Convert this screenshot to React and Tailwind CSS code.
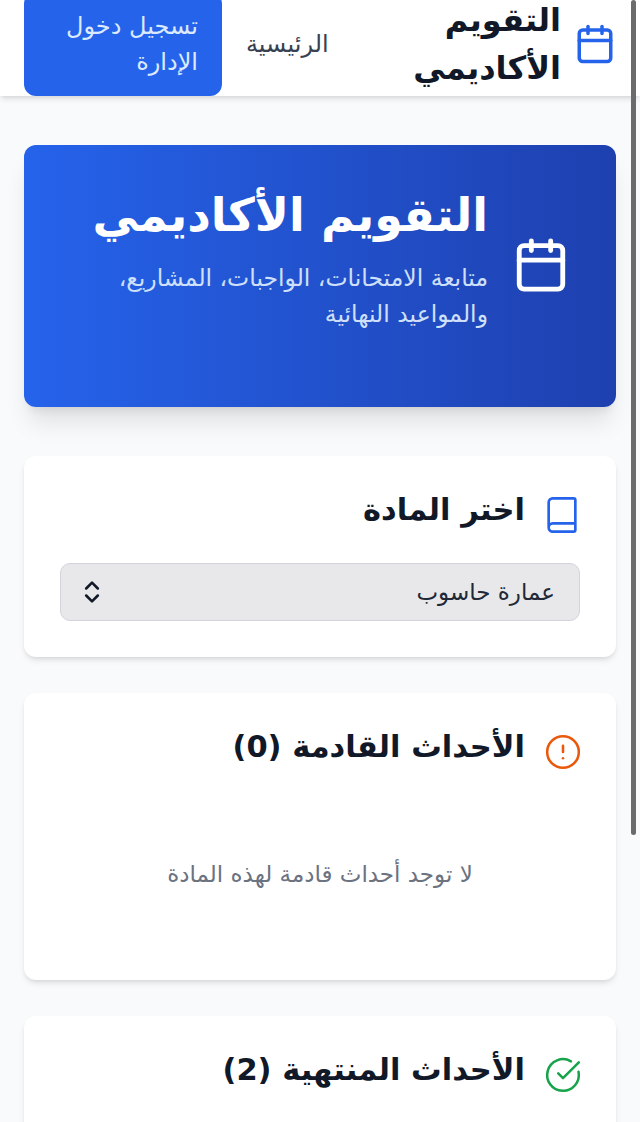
import React from 'react';
import { Calendar, Book, CircleAlert, CircleCheckBig, ChevronsUpDown } from 'lucide-react';

function SectionTitle({ icon: Icon, iconClass, children }) {
  return (
    <div className="flex items-start h-[43px]">
      <Icon className={`shrink-0 -mr-[2px] ${iconClass}`} strokeWidth={1.6} />
      <h2 className="text-[30.5px] leading-9 font-bold text-[#111827]">{children}</h2>
    </div>
  );
}

export default function App() {
  return (
    <div dir="rtl" className="relative h-[1122px] overflow-hidden bg-[#f9fafb] font-['DejaVu_Sans',sans-serif]">
      {/* Header */}
      <header className="h-24 bg-white shadow-md flex items-center justify-between px-6 pb-[9px]">
        <div className="flex items-center gap-[13px]">
          <Calendar className="w-[42px] h-[42px] text-[#2563eb]" />
          <span className="w-[150px] text-[32px] leading-[48px] font-bold text-[#111827]">التقويم الأكاديمي</span>
        </div>
        <div className="flex items-center gap-4">
          <span className="text-2xl text-[#374151] px-2">الرئيسية</span>
          <button className="w-[198px] h-[104px] bg-[#2563eb] text-[#dbeafe] rounded-xl text-2xl leading-9 px-6 text-right">
            تسجيل دخول الإدارة
          </button>
        </div>
      </header>

      <main className="px-6 pt-[49px] flex flex-col gap-9">
        {/* Hero */}
        <section className="h-[262px] mb-[13px] rounded-xl bg-gradient-to-r from-[#2563eb] to-[#1e40af] shadow-xl flex items-start gap-6 pr-[46px] pl-[60px] pt-10">
          <Calendar className="w-[58px] h-[58px] shrink-0 text-white mt-[51px]" />
          <div>
            <h1 className="text-[46px] leading-[60px] font-bold text-white whitespace-nowrap">التقويم الأكاديمي</h1>
            <p className="mt-[15px] text-[23.5px] leading-9 text-[#cfe0fb]">متابعة الامتحانات، الواجبات، المشاريع، والمواعيد النهائية</p>
          </div>
        </section>

        {/* Course select */}
        <section className="h-[201px] bg-white rounded-xl shadow-md p-9">
          <SectionTitle icon={Book} iconClass="w-10 h-10 mt-[3px] ml-[17px] text-[#2563eb]">اختر المادة</SectionTitle>
          <div className="mt-7 h-[58px] rounded-[10px] border border-[#d1d5db] bg-[#e8e8ea] flex items-center justify-between pr-6 pl-[17px] text-[23px] text-[#1f2937]">
            <span>عمارة حاسوب</span>
            <ChevronsUpDown className="w-7 h-7 text-[#111827]" strokeWidth={2.2} />
          </div>
        </section>

        {/* Upcoming */}
        <section className="h-[287px] bg-white rounded-xl shadow-md p-9">
          <SectionTitle icon={CircleAlert} iconClass="w-[38px] h-[38px] mt-1 ml-[19px] text-[#ea580c]">الأحداث القادمة (0)</SectionTitle>
          <p className="mt-[86px] text-center text-[23px] leading-8 text-[#6b7280]">لا توجد أحداث قادمة لهذه المادة</p>
        </section>

        {/* Past */}
        <section className="h-[300px] bg-white rounded-xl shadow-md p-9">
          <SectionTitle icon={CircleCheckBig} iconClass="w-[38px] h-[38px] mt-1 ml-[19px] text-[#16a34a]">الأحداث المنتهية (2)</SectionTitle>
        </section>
      </main>

      {/* scrollbar thumb */}
      <div className="absolute top-0 right-[4px] w-[5px] h-[835px] rounded-full bg-[#6b6b6b]" />
    </div>
  );
}
